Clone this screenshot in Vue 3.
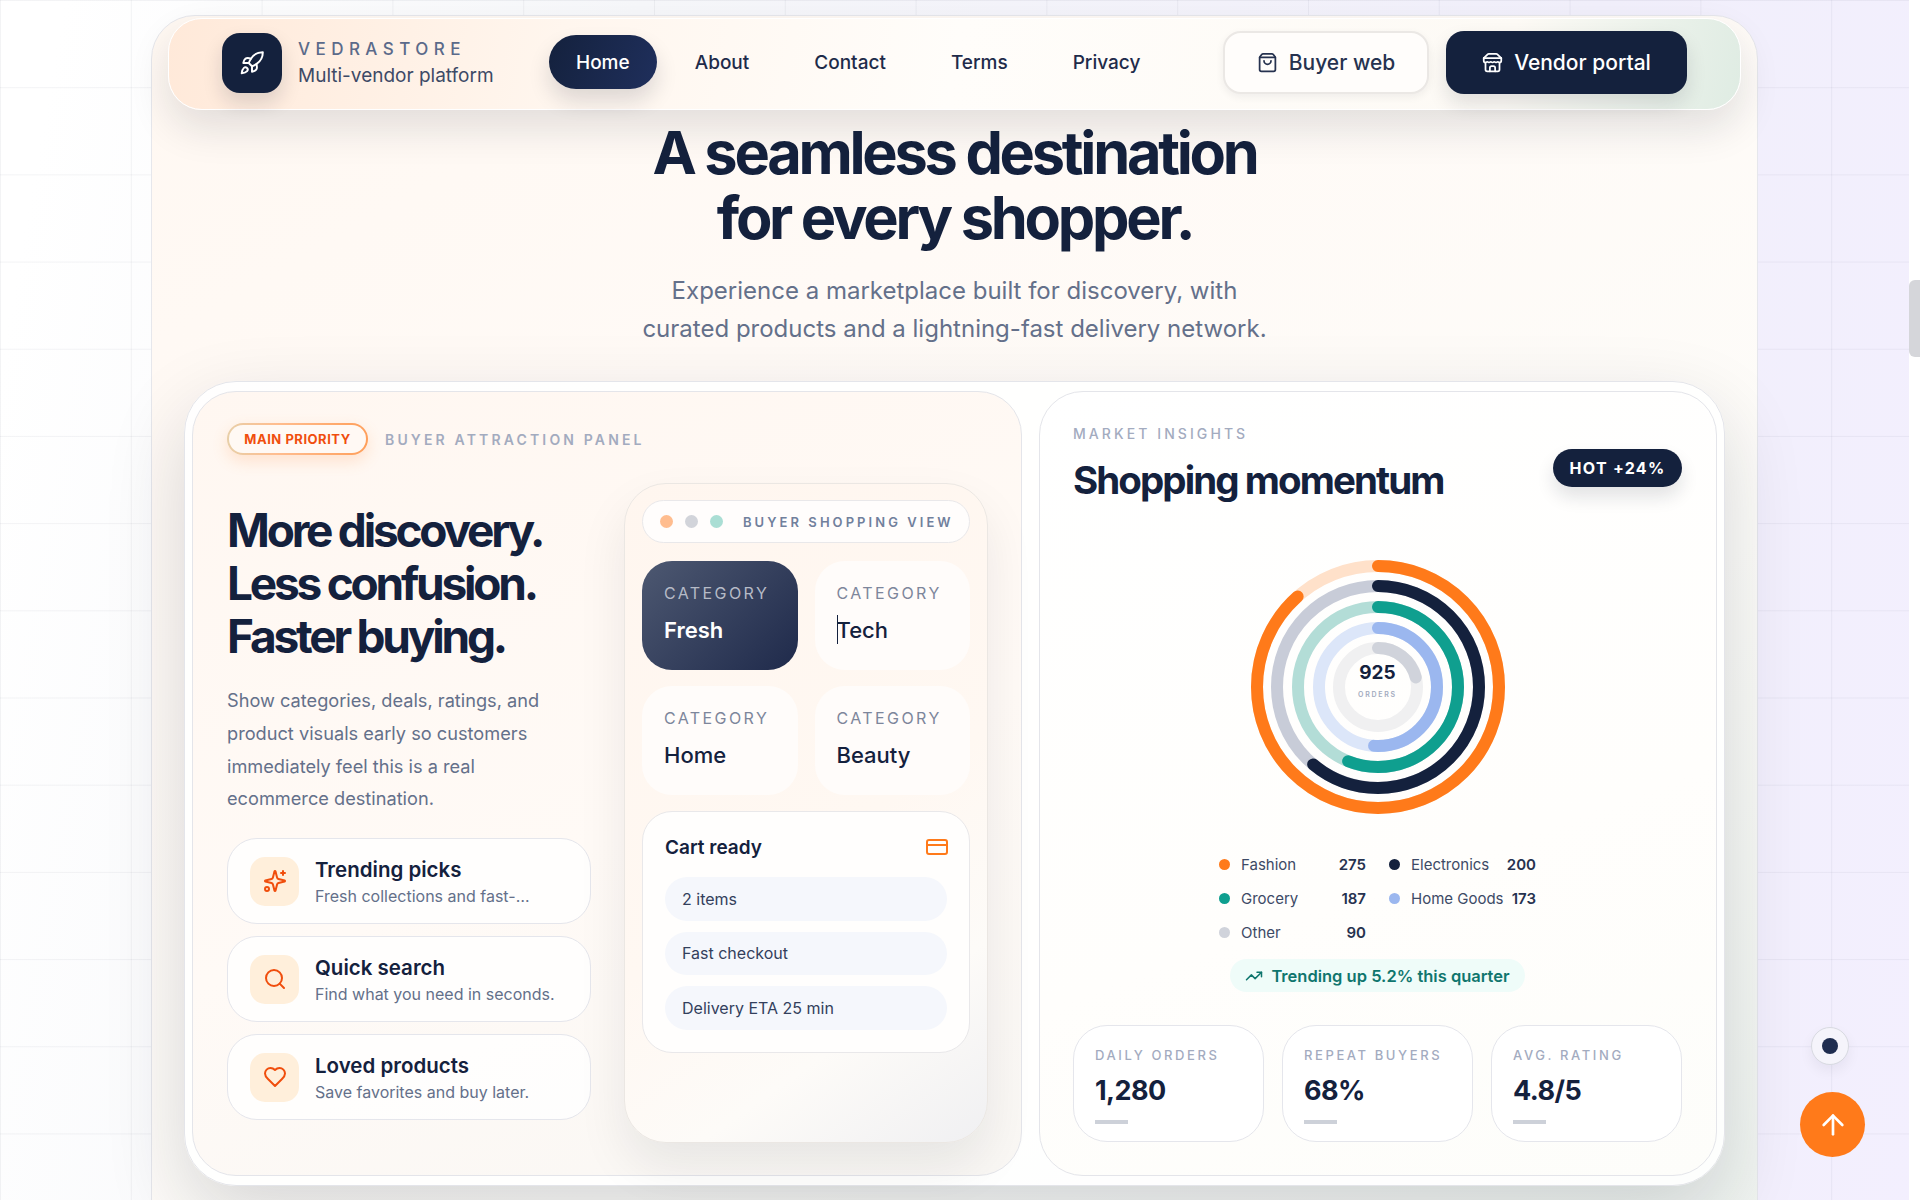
<script setup>
const icons = {
  rocket: ['M4.5 16.5c-1.5 1.26-2 5-2 5s3.74-.5 5-2c.71-.84.7-2.13-.09-2.91a2.18 2.18 0 0 0-2.91-.09z', 'm12 15-3-3a22 22 0 0 1 2-3.95A12.88 12.88 0 0 1 22 2c0 2.72-.78 7.5-6 11a22.35 22.35 0 0 1-4 2z', 'M9 12H4s.55-3.03 2-4c1.62-1.08 5 0 5 0', 'M12 15v5s3.03-.55 4-2c1.08-1.62 0-5 0-5'],
  bag: ['M16 10a4 4 0 0 1-8 0', 'M3.103 6.034h17.794', 'M3.4 5.467a2 2 0 0 0-.4 1.2V20a2 2 0 0 0 2 2h14a2 2 0 0 0 2-2V6.667a2 2 0 0 0-.4-1.2l-2-2.667A2 2 0 0 0 17 2H7a2 2 0 0 0-1.6.8z'],
  store: ['m2 7 4.41-4.41A2 2 0 0 1 7.83 2h8.34a2 2 0 0 1 1.42.59L22 7', 'M4 12v8a2 2 0 0 0 2 2h12a2 2 0 0 0 2-2v-8', 'M15 22v-4a2 2 0 0 0-2-2h-2a2 2 0 0 0-2 2v4', 'M2 7h20', 'M22 7v3a2 2 0 0 1-2 2a2.7 2.7 0 0 1-1.59-.63.7.7 0 0 0-.82 0A2.7 2.7 0 0 1 16 12a2.7 2.7 0 0 1-1.59-.63.7.7 0 0 0-.82 0A2.7 2.7 0 0 1 12 12a2.7 2.7 0 0 1-1.59-.63.7.7 0 0 0-.82 0A2.7 2.7 0 0 1 8 12a2.7 2.7 0 0 1-1.59-.63.7.7 0 0 0-.82 0A2.7 2.7 0 0 1 4 12a2 2 0 0 1-2-2V7'],
  sparkles: ['M9.937 15.5A2 2 0 0 0 8.5 14.063l-6.135-1.582a.5.5 0 0 1 0-.962L8.5 9.936A2 2 0 0 0 9.937 8.5l1.582-6.135a.5.5 0 0 1 .963 0L14.063 8.5A2 2 0 0 0 15.5 9.937l6.135 1.581a.5.5 0 0 1 0 .964L15.5 14.063a2 2 0 0 0-1.437 1.437l-1.582 6.135a.5.5 0 0 1-.963 0z', 'M20 2v4', 'M22 4h-4', 'M4 18a2 2 0 1 0 0 4 2 2 0 1 0 0-4'],
  search: ['m21 21-4.34-4.34', 'M11 3a8 8 0 1 0 0 16 8 8 0 1 0 0-16'],
  heart: ['M19 14c1.49-1.46 3-3.21 3-5.5A5.5 5.5 0 0 0 16.5 3c-1.76 0-3 .5-4.5 2-1.5-1.5-2.74-2-4.5-2A5.5 5.5 0 0 0 2 8.5c0 2.3 1.5 4.05 3 5.5l7 7Z'],
  card: ['M4 5h16a2 2 0 0 1 2 2v10a2 2 0 0 1-2 2H4a2 2 0 0 1-2-2V7a2 2 0 0 1 2-2z', 'M2 10h20'],
  trend: ['M16 7h6v6', 'm22 7-8.5 8.5-5-5L2 17'],
  up: ['m5 12 7-7 7 7', 'M12 19V5'],
}

const links = ['Home', 'About', 'Contact', 'Terms', 'Privacy']

const features = [
  { icon: 'sparkles', title: 'Trending picks', text: 'Fresh collections and fast-…' },
  { icon: 'search', title: 'Quick search', text: 'Find what you need in seconds.' },
  { icon: 'heart', title: 'Loved products', text: 'Save favorites and buy later.' },
]

const categories = ['Fresh', 'Tech', 'Home', 'Beauty']
const cartRows = ['2 items', 'Fast checkout', 'Delivery ETA 25 min']

const rings = [
  { r: 121, pct: 0.884, color: '#ff7a1a', track: '#ffe1ca' },
  { r: 101, pct: 0.61, color: '#14213d', track: '#c8ccd8' },
  { r: 80, pct: 0.56, color: '#0f9f8f', track: '#b3ddd7' },
  { r: 59, pct: 0.51, color: '#9bb7ef', track: '#dce6f9' },
  { r: 39, pct: 0.21, color: '#d0d3db', track: '#f0f0f1' },
]

const legend = [
  { name: 'Fashion', value: 275, color: '#ff7a1a' },
  { name: 'Electronics', value: 200, color: '#14213d' },
  { name: 'Grocery', value: 187, color: '#0f9f8f' },
  { name: 'Home Goods', value: 173, color: '#9bb7ef' },
  { name: 'Other', value: 90, color: '#d0d3db' },
]

const stats = [
  { label: 'DAILY ORDERS', value: '1,280' },
  { label: 'REPEAT BUYERS', value: '68%' },
  { label: 'AVG. RATING', value: '4.8/5' },
]

function dash(ring) {
  const c = 2 * Math.PI * ring.r
  return `${c * ring.pct} ${c}`
}
</script>

<template>
  <div class="page">
    <div class="shell">
      <header class="nav">
        <div class="brand">
          <div class="logo">
            <svg width="26" height="26" viewBox="0 0 24 24" class="ico"><path v-for="d in icons.rocket" :key="d" :d="d" /></svg>
          </div>
          <div class="brand-text">
            <div class="brand-name">VEDRASTORE</div>
            <div class="brand-sub">Multi-vendor platform</div>
          </div>
        </div>
        <nav class="links">
          <a v-for="l in links" :key="l" class="link" :class="{ active: l === 'Home' }">{{ l }}</a>
        </nav>
        <div class="actions">
          <a class="btn btn-light">
            <svg width="21" height="21" viewBox="0 0 24 24" class="ico"><path v-for="d in icons.bag" :key="d" :d="d" /></svg>
            Buyer web
          </a>
          <a class="btn btn-dark">
            <svg width="21" height="21" viewBox="0 0 24 24" class="ico"><path v-for="d in icons.store" :key="d" :d="d" /></svg>
            Vendor portal
          </a>
        </div>
      </header>

      <section class="hero">
        <h1>A seamless destination<br />for every shopper.</h1>
        <p>Experience a marketplace built for discovery, with<br />curated products and a lightning-fast delivery network.</p>
      </section>

      <section class="panel">
        <div class="left-card">
          <div class="tag-row">
            <span class="priority">MAIN PRIORITY</span>
            <span class="tag-label">BUYER ATTRACTION PANEL</span>
          </div>
          <div class="left-body">
            <div class="pitch">
              <h2>More discovery.<br />Less confusion.<br />Faster buying.</h2>
              <p>Show categories, deals, ratings, and<br />product visuals early so customers<br />immediately feel this is a real<br />ecommerce destination.</p>
              <div class="features">
                <div v-for="f in features" :key="f.title" class="feature">
                  <div class="feature-icon">
                    <svg width="24" height="24" viewBox="0 0 24 24" class="ico"><path v-for="d in icons[f.icon]" :key="d" :d="d" /></svg>
                  </div>
                  <div>
                    <div class="feature-title">{{ f.title }}</div>
                    <div class="feature-text">{{ f.text }}</div>
                  </div>
                </div>
              </div>
            </div>

            <div class="phone">
              <div class="phone-head">
                <i class="dot" style="background:#ffbd8f"></i>
                <i class="dot" style="background:#d2d4da"></i>
                <i class="dot" style="background:#aaded4"></i>
                <span>BUYER SHOPPING VIEW</span>
              </div>
              <div class="cats">
                <div v-for="c in categories" :key="c" class="cat" :class="{ on: c === 'Fresh' }">
                  <div class="cat-label">CATEGORY</div>
                  <div class="cat-value">{{ c }}</div>
                  <i v-if="c === 'Tech'" class="caret"></i>
                </div>
              </div>
              <div class="cart">
                <div class="cart-head">
                  <span>Cart ready</span>
                  <svg width="24" height="24" viewBox="0 0 24 24" class="ico card-ico"><path v-for="d in icons.card" :key="d" :d="d" /></svg>
                </div>
                <div v-for="r in cartRows" :key="r" class="cart-row">{{ r }}</div>
              </div>
            </div>
          </div>
        </div>

        <div class="right-card">
          <div class="right-head">
            <div>
              <div class="eyebrow">MARKET INSIGHTS</div>
              <h3>Shopping momentum</h3>
            </div>
            <span class="hot">HOT +24%</span>
          </div>

          <div class="chart">
            <svg width="256" height="256" viewBox="0 0 256 256">
              <g v-for="ring in rings" :key="ring.r" fill="none" stroke-width="12">
                <circle cx="128" cy="128" :r="ring.r" :stroke="ring.track" />
                <circle cx="128" cy="128" :r="ring.r" :stroke="ring.color" stroke-linecap="round" :stroke-dasharray="dash(ring)" transform="rotate(-90 128 128)" />
              </g>
            </svg>
            <div class="chart-mid">
              <b>925</b>
              <span>ORDERS</span>
            </div>
          </div>

          <div class="legend">
            <div v-for="item in legend" :key="item.name" class="legend-row">
              <i :style="{ background: item.color }"></i>
              <span>{{ item.name }}</span>
              <b>{{ item.value }}</b>
            </div>
          </div>

          <div class="trend">
            <svg width="18" height="18" viewBox="0 0 24 24" class="ico"><path v-for="d in icons.trend" :key="d" :d="d" /></svg>
            Trending up 5.2% this quarter
          </div>

          <div class="stats">
            <div v-for="s in stats" :key="s.label" class="stat">
              <div class="stat-label">{{ s.label }}</div>
              <div class="stat-value">{{ s.value }}</div>
              <i></i>
            </div>
          </div>
        </div>
      </section>
    </div>

    <div class="scroll-dot"><i></i></div>
    <button class="to-top">
      <svg width="28" height="28" viewBox="0 0 24 24" class="ico"><path v-for="d in icons.up" :key="d" :d="d" /></svg>
    </button>
    <div class="scrollbar"><i></i></div>
  </div>
</template>

<style>
html, body {
  margin: 0;
  height: 1200px;
  overflow: hidden;
}
</style>

<style scoped>
.page {
  position: relative;
  height: 1200px;
  overflow: hidden;
  font-family: Inter, "Liberation Sans", sans-serif;
  color: #14213d;
  background-color: #f8f7fd;
  background-image:
    linear-gradient(rgba(20, 33, 61, 0.05) 1px, transparent 1px),
    linear-gradient(90deg, rgba(20, 33, 61, 0.05) 1px, transparent 1px),
    linear-gradient(100deg, #fff 3%, #f6f7fa 30%, #f1effb 75%, #f3effe 100%);
  background-size: 130.8px 87.2px, 130.8px 87.2px, 100% 100%;
}
.ico {
  fill: none;
  stroke: currentColor;
  stroke-width: 2;
  stroke-linecap: round;
  stroke-linejoin: round;
  flex: none;
}
.shell {
  box-sizing: border-box;
  width: 1607px;
  height: 1300px;
  margin: 0 0 0 151px;
  position: relative;
  top: 15px;
  padding: 2px 32px 0;
  border: 1px solid #e6e7ec;
  border-radius: 44px;
  background: linear-gradient(150deg, #fff8f2 0%, #fffaf6 30%, #fdfcf9 65%, #eef3ef 100%);
}
.nav {
  display: flex;
  align-items: center;
  box-sizing: border-box;
  height: 92px;
  margin: 0 -16px;
  padding: 0 53px 3px 53px;
  border: 1px solid #fff;
  border-radius: 34px;
  background: linear-gradient(100deg, #ffe9d9 0%, #fff6ee 25%, #fffdfa 50%, #fdfaf5 85%, #dfece3 100%);
  box-shadow: 0 18px 40px rgba(15, 23, 42, 0.12);
  position: relative;
  z-index: 2;
}
.brand {
  display: flex;
  align-items: center;
  gap: 16px;
  width: 327px;
  flex: none;
}
.brand-text {
  padding-top: 4px;
}
.logo {
  width: 60px;
  height: 60px;
  border-radius: 18px;
  background: #14213d;
  color: #fff;
  display: flex;
  align-items: center;
  justify-content: center;
  box-shadow: 0 10px 20px rgba(15, 23, 42, 0.14);
}
.logo .ico {
  stroke-width: 1.8;
}
.brand-name {
  font-size: 17px;
  font-weight: 500;
  letter-spacing: 0.32em;
  color: #5b6a8a;
  line-height: 22px;
}
.brand-sub {
  font-size: 19px;
  line-height: 32px;
  color: #3d4a66;
}
.links {
  display: flex;
  gap: 11px;
  margin-top: -1px;
}
.link {
  height: 54px;
  padding: 0 27px;
  display: flex;
  align-items: center;
  font-size: 19px;
  font-weight: 500;
  border-radius: 27px;
  color: #1e2b4a;
}
.link.active {
  padding: 0 27px;
  color: #fff;
  background: linear-gradient(110deg, #14213d, #1f2f5c);
  box-shadow: 0 12px 22px rgba(15, 23, 42, 0.14);
}
.actions {
  margin-left: auto;
  display: flex;
  gap: 17px;
}
.btn {
  box-sizing: border-box;
  height: 63px;
  border-radius: 18px;
  display: flex;
  align-items: center;
  justify-content: center;
  gap: 11px;
  font-size: 21px;
  font-weight: 500;
}
.btn-light {
  width: 206px;
  background: #fffdfb;
  border: 2px solid #ebe8e5;
  box-shadow: 0 3px 8px rgba(15, 23, 42, 0.06);
  color: #26324f;
}
.btn-dark {
  width: 241px;
  background: #14213d;
  color: #fff;
  box-shadow: 0 10px 20px rgba(15, 23, 42, 0.12);
}

.hero {
  text-align: center;
}
.hero h1 {
  margin: 10px 0 0;
  font-size: 59.5px;
  line-height: 65px;
  font-weight: 700;
  letter-spacing: -0.055em;
}
.hero p {
  margin: 22px 0 0;
  font-size: 24px;
  line-height: 38px;
  color: #64708a;
}

.panel {
  box-sizing: border-box;
  margin-top: 33px;
  height: 805px;
  padding: 9px 7px 7px;
  display: grid;
  grid-template-columns: 830px 678px;
  gap: 17px;
  border: 1px solid #e4e5ea;
  border-radius: 52px;
  background: rgba(255, 255, 255, 0.85);
  box-shadow: 0 30px 80px rgba(15, 23, 42, 0.16);
}
.left-card, .right-card {
  box-sizing: border-box;
  height: 785px;
  border: 1px solid #e4e5ea;
  border-radius: 44px;
}
.left-card {
  padding: 31px 34px 0 34px;
  background: linear-gradient(160deg, #fff7f1 0%, #fffaf6 55%, #f9f7f4 100%);
}
.tag-row {
  display: flex;
  align-items: center;
  gap: 17px;
}
.priority {
  box-sizing: border-box;
  height: 32px;
  width: 141px;
  display: flex;
  align-items: center;
  justify-content: center;
  font-size: 13px;
  font-weight: 700;
  letter-spacing: 0.04em;
  color: #f04e0d;
  border: 2px solid transparent;
  border-radius: 16px;
  background: linear-gradient(#fff9f4, #fff9f4) padding-box, linear-gradient(90deg, #e8cfa8, #ffbd8f 35%, #ff9f5a) border-box;
  box-shadow: 0 6px 16px rgba(255, 140, 60, 0.2);
}
.tag-label {
  font-size: 14px;
  font-weight: 600;
  letter-spacing: 0.225em;
  color: #a3abbf;
}
.left-body {
  margin-top: 28px;
  display: grid;
  grid-template-columns: 364px 364px;
  gap: 33px;
}
.pitch {
  padding-top: 21px;
}
.pitch h2 {
  margin: 0;
  font-size: 46px;
  line-height: 53px;
  font-weight: 700;
  letter-spacing: -0.07em;
}
.pitch p {
  margin: 21px 0 0;
  font-size: 18.2px;
  line-height: 32.8px;
  color: #64708a;
}
.features {
  margin-top: 23px;
  display: flex;
  flex-direction: column;
  gap: 12px;
}
.feature {
  box-sizing: border-box;
  height: 86px;
  padding: 0 22px;
  display: flex;
  align-items: center;
  gap: 16px;
  border: 1px solid #e5e6ec;
  border-radius: 30px;
  background: rgba(255, 255, 255, 0.75);
}
.feature-icon {
  width: 49px;
  height: 49px;
  border-radius: 15px;
  background: #ffefdb;
  color: #f04e0d;
  display: flex;
  align-items: center;
  justify-content: center;
}
.feature-title {
  font-size: 20.5px;
  font-weight: 600;
  line-height: 27px;
}
.feature-text {
  margin-top: 2px;
  font-size: 16px;
  line-height: 22px;
  color: #64708a;
}

.phone {
  box-sizing: border-box;
  height: 660px;
  padding: 16px 17px;
  border: 1px solid #ebe7e3;
  border-radius: 42px;
  background: linear-gradient(145deg, #fff6ef 0%, #fff8f2 55%, #fdfbf8 78%, #f0f0f2 100%);
  box-shadow: 0 24px 50px rgba(15, 23, 42, 0.08);
}
.phone-head {
  box-sizing: border-box;
  height: 43px;
  padding: 0 17px;
  display: flex;
  align-items: center;
  gap: 12px;
  border: 1px solid #e9e8ea;
  border-radius: 22px;
  background: #fffdfc;
}
.dot {
  width: 13px;
  height: 13px;
  border-radius: 50%;
  flex: none;
}
.phone-head span {
  margin-left: 8px;
  font-size: 13px;
  font-weight: 600;
  letter-spacing: 0.235em;
  white-space: nowrap;
  color: #71809c;
}
.cats {
  margin-top: 18px;
  display: grid;
  grid-template-columns: 1fr 1fr;
  gap: 16px 17px;
}
.cat {
  position: relative;
  box-sizing: border-box;
  height: 109px;
  padding: 22px 22px 0;
  border-radius: 30px;
  background: #fffcfa;
}
.cat.on {
  background: linear-gradient(135deg, #4d5871 0%, #1f2a4b 100%);
  color: #fff;
}
.cat-label {
  font-size: 16px;
  line-height: 20px;
  letter-spacing: 0.15em;
  color: #7d869b;
}
.cat.on .cat-label {
  color: #b6bbc7;
}
.cat-value {
  margin-top: 13px;
  font-size: 22px;
  line-height: 28px;
  font-weight: 500;
}
.cat.on .cat-value {
  font-weight: 600;
}
.caret {
  position: absolute;
  left: 22px;
  top: 54px;
  width: 1px;
  height: 29px;
  background: #14213d;
}
.cart {
  box-sizing: border-box;
  height: 242px;
  margin-top: 16px;
  padding: 21px 22px 0;
  border: 1px solid #e9e8ea;
  border-radius: 30px;
  background: #fffefd;
}
.cart-head {
  display: flex;
  align-items: center;
  justify-content: space-between;
  height: 28px;
  font-size: 19px;
  font-weight: 600;
}
.card-ico {
  color: #ff7a1a;
  margin-right: -2px;
}
.cart-row {
  height: 43.5px;
  margin-bottom: 11px;
  padding-left: 17px;
  display: flex;
  align-items: center;
  border-radius: 22px;
  font-size: 16px;
  color: #333f5c;
  background: #f5f7fc;
}
.cart-head + .cart-row {
  margin-top: 16px;
}

.right-card {
  padding: 33px 34px 0 33px;
  background: linear-gradient(160deg, #fff 0%, #fffefc 60%, #fdfdfa 100%);
}
.right-head {
  display: flex;
  justify-content: space-between;
  align-items: center;
}
.eyebrow {
  font-size: 14px;
  line-height: 18px;
  font-weight: 500;
  letter-spacing: 0.22em;
  color: #a3abbf;
}
.right-head h3 {
  margin: 14px 0 0;
  font-size: 38.5px;
  line-height: 46px;
  font-weight: 700;
  letter-spacing: -0.05em;
}
.hot {
  height: 38px;
  width: 129px;
  margin-top: 8px;
  display: flex;
  align-items: center;
  justify-content: center;
  border-radius: 19px;
  background: #14213d;
  color: #fff;
  font-size: 16px;
  font-weight: 700;
  letter-spacing: 0.08em;
  box-shadow: 0 10px 18px rgba(15, 23, 42, 0.12);
}
.chart {
  position: relative;
  width: 256px;
  height: 256px;
  margin: 56px auto 0;
}
.chart svg {
  display: block;
}
.chart-mid {
  position: absolute;
  inset: 0;
  padding-bottom: 14px;
  box-sizing: border-box;
  display: flex;
  flex-direction: column;
  align-items: center;
  justify-content: center;
}
.chart-mid b {
  font-size: 19px;
  line-height: 22px;
  font-weight: 700;
}
.chart-mid span {
  margin-top: 6px;
  font-size: 7px;
  font-weight: 600;
  letter-spacing: 0.25em;
  color: #a3abbf;
}
.legend {
  width: 317px;
  margin: 39px auto 0;
  display: grid;
  grid-template-columns: 147px 147px;
  column-gap: 23px;
  row-gap: 14px;
}
.legend-row {
  display: flex;
  align-items: center;
  height: 20px;
  font-size: 15px;
  color: #3d4a66;
}
.legend-row i {
  width: 11px;
  height: 11px;
  border-radius: 50%;
  margin-right: 11px;
}
.legend-row b {
  margin-left: auto;
  font-weight: 600;
  color: #26324f;
}
.trend {
  box-sizing: border-box;
  width: 295px;
  height: 33px;
  margin: 17px auto 0;
  display: flex;
  align-items: center;
  justify-content: center;
  gap: 8px;
  border-radius: 17px;
  background: #effcf9;
  color: #0f766e;
  font-size: 16.5px;
  font-weight: 600;
}
.stats {
  margin-top: 33px;
  display: grid;
  grid-template-columns: repeat(3, 1fr);
  gap: 18px;
}
.stat {
  box-sizing: border-box;
  height: 117px;
  padding: 20px 21px 0;
  border: 1px solid #e5e6ec;
  border-radius: 34px;
  background: #fff;
}
.stat-label {
  font-size: 13px;
  line-height: 18px;
  font-weight: 500;
  letter-spacing: 0.2em;
  white-space: nowrap;
  color: #a3abbf;
}
.stat-value {
  margin-top: 10px;
  font-size: 27px;
  line-height: 34px;
  font-weight: 700;
  letter-spacing: -0.02em;
}
.stat i {
  display: block;
  margin-top: 12px;
  width: 33px;
  height: 4px;
  background: #cdd1d9;
}
.scroll-dot {
  position: absolute;
  left: 1811px;
  top: 1027px;
  box-sizing: border-box;
  width: 38px;
  height: 38px;
  border: 1px solid #d8dae1;
  border-radius: 50%;
  display: flex;
  align-items: center;
  justify-content: center;
  background: #f5f4fb;
  box-shadow: 0 6px 14px rgba(15, 23, 42, 0.06);
}
.scroll-dot i {
  width: 16px;
  height: 16px;
  border-radius: 50%;
  background: #1f2d50;
}
.to-top {
  position: absolute;
  left: 1800px;
  top: 1092px;
  width: 65px;
  height: 65px;
  padding: 0;
  border: 0;
  border-radius: 50%;
  background: #ff7a1a;
  color: #fff;
  display: flex;
  align-items: center;
  justify-content: center;
}
.to-top .ico {
  width: 32px;
  height: 32px;
}
.scrollbar {
  position: absolute;
  right: 0;
  top: 0;
  bottom: 0;
  width: 11px;
  background: #fff;
}
.scrollbar i {
  position: absolute;
  top: 280px;
  left: 0;
  width: 11px;
  height: 77px;
  border-radius: 6px 0 0 6px;
  background: #d5d6da;
}
</style>
